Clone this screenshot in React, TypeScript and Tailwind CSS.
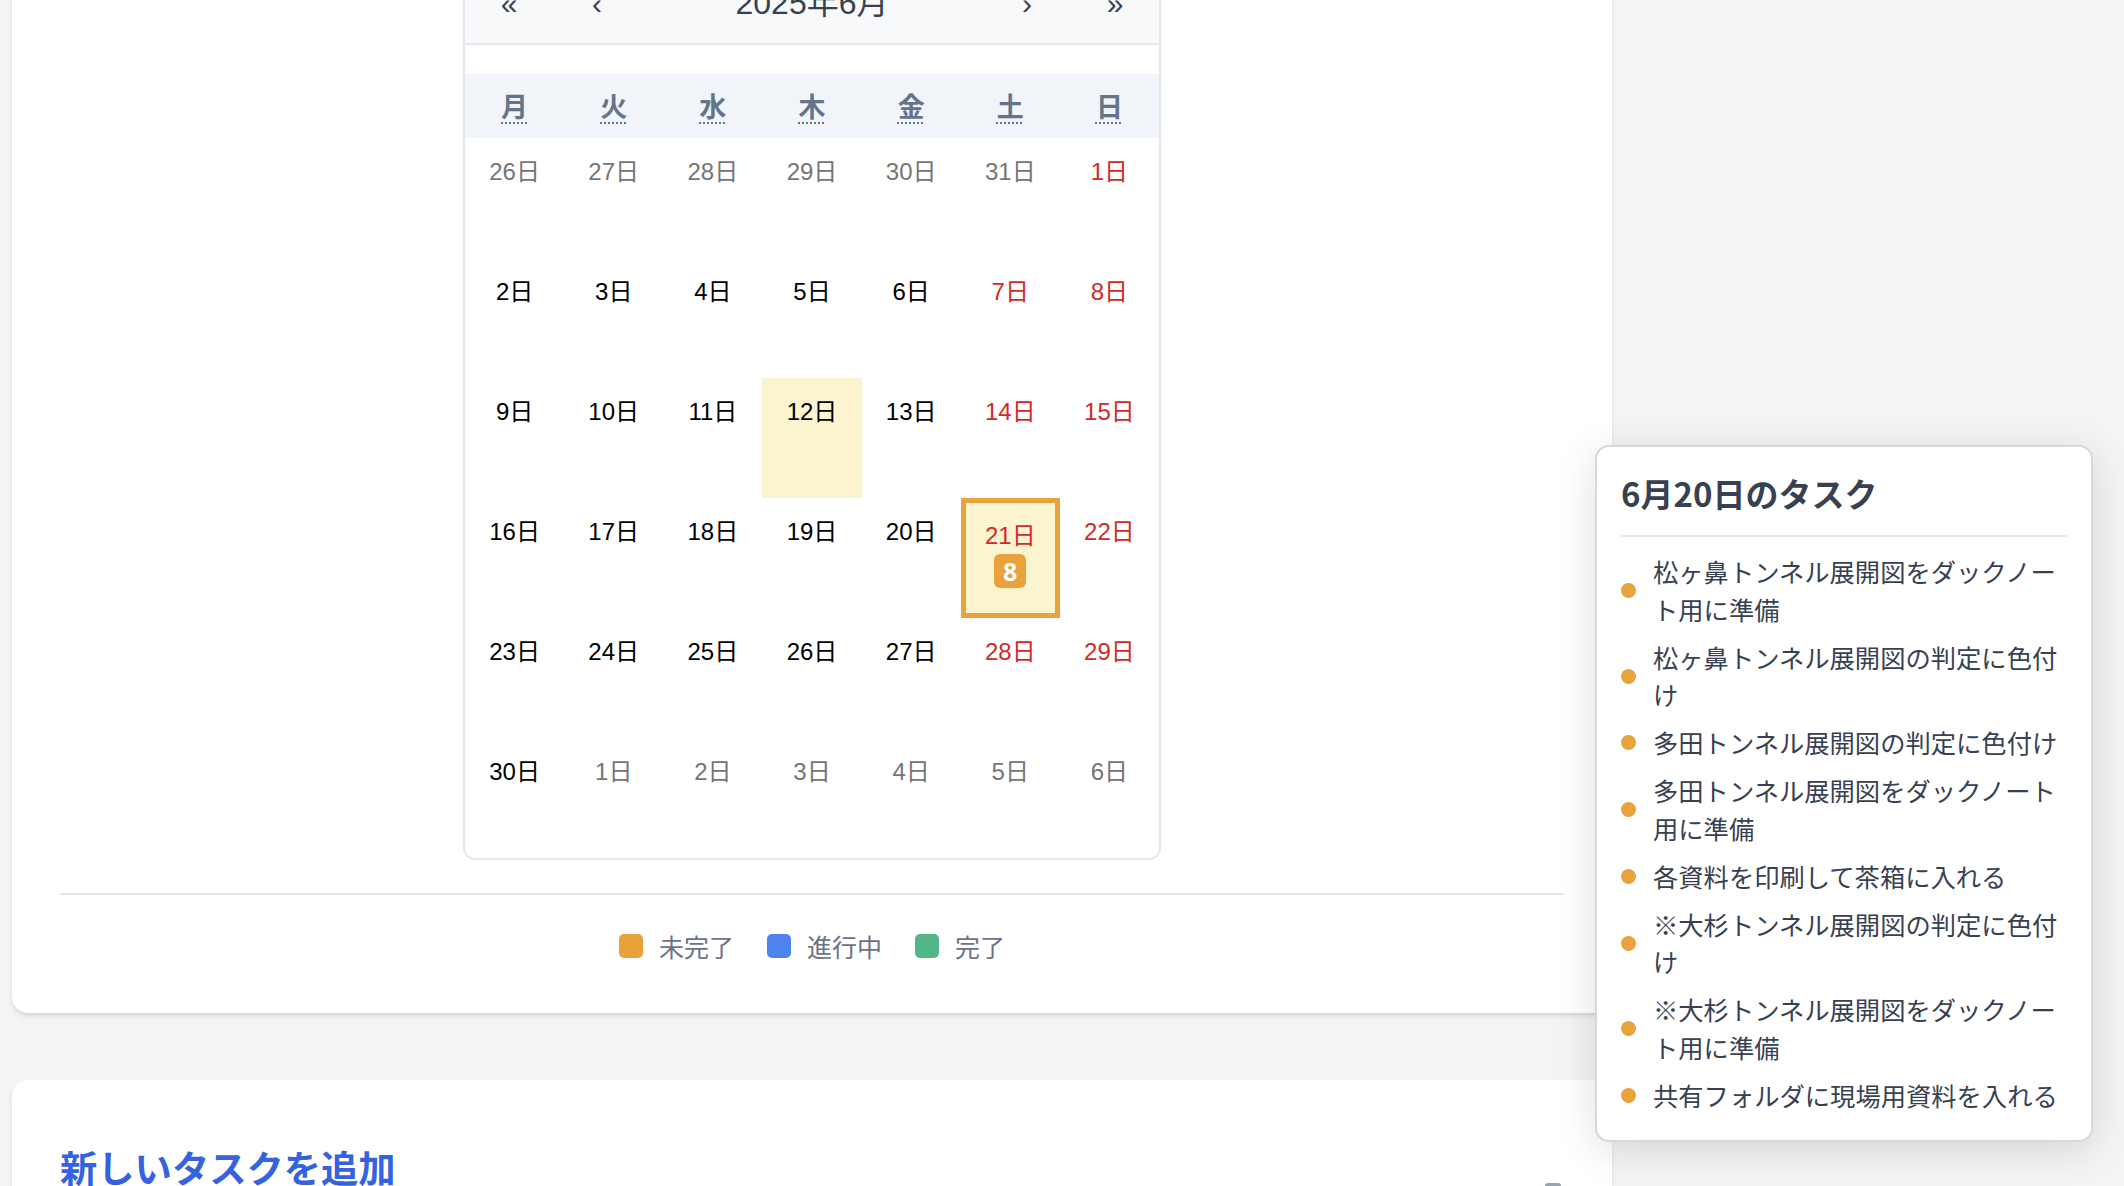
import React from 'react';

type Kind = 'o' | 'n' | 'w';

const rows: [number, Kind][][] = [
  [[26, 'o'], [27, 'o'], [28, 'o'], [29, 'o'], [30, 'o'], [31, 'o'], [1, 'w']],
  [[2, 'n'], [3, 'n'], [4, 'n'], [5, 'n'], [6, 'n'], [7, 'w'], [8, 'w']],
  [[9, 'n'], [10, 'n'], [11, 'n'], [12, 'n'], [13, 'n'], [14, 'w'], [15, 'w']],
  [[16, 'n'], [17, 'n'], [18, 'n'], [19, 'n'], [20, 'n'], [21, 'w'], [22, 'w']],
  [[23, 'n'], [24, 'n'], [25, 'n'], [26, 'n'], [27, 'n'], [28, 'w'], [29, 'w']],
  [[30, 'n'], [1, 'o'], [2, 'o'], [3, 'o'], [4, 'o'], [5, 'o'], [6, 'o']],
];

const weekdays = [
  ['月', '月曜日'],
  ['火', '火曜日'],
  ['水', '水曜日'],
  ['木', '木曜日'],
  ['金', '金曜日'],
  ['土', '土曜日'],
  ['日', '日曜日'],
];

const tasks = [
  '松ヶ鼻トンネル展開図をダックノート用に準備',
  '松ヶ鼻トンネル展開図の判定に色付け',
  '多田トンネル展開図の判定に色付け',
  '多田トンネル展開図をダックノート用に準備',
  '各資料を印刷して茶箱に入れる',
  '※大杉トンネル展開図の判定に色付け',
  '※大杉トンネル展開図をダックノート用に準備',
  '共有フォルダに現場用資料を入れる',
];

const colorFor = (k: Kind) =>
  k === 'o' ? 'text-[#757575]' : k === 'w' ? 'text-[#cf2a2a]' : 'text-black';

function Tile({ day, kind, row, col }: { day: number; kind: Kind; row: number; col: number }) {
  const isToday = row === 2 && col === 3;
  const isSelected = row === 3 && col === 5;

  if (isSelected) {
    return (
      <div className="h-[120px] flex flex-col items-center pt-[19px] border-[5px] border-[#e8a33d] bg-[#fcf3cf]">
        <span className={`text-[24px] leading-[28px] ${colorFor(kind)}`}>{day}日</span>
        <span className="mt-[4px] w-[32px] h-[34px] rounded-[6px] bg-[#e8a33d] text-white font-bold text-[25px] leading-none flex items-center justify-center font-['Noto_Sans','Noto_Sans_CJK_JP',sans-serif]">
          8
        </span>
      </div>
    );
  }

  return (
    <div className={`h-[120px] flex flex-col items-center pt-[20px] ${isToday ? 'bg-[#fcf3cf]' : ''}`}>
      <span className={`text-[24px] leading-[28px] ${colorFor(kind)}`}>{day}日</span>
    </div>
  );
}

function Calendar() {
  return (
    <div className="w-[698px] mx-auto border-2 border-[#e5e7eb] rounded-[12px] overflow-hidden bg-white font-['Liberation_Sans','Noto_Sans_CJK_JP',sans-serif]">
      <div className="h-[82px] flex items-center bg-[#f8f9fb] border-b-2 border-[#e5e7eb] text-[#374151]">
        <button className="w-[88px] text-[30px]">«</button>
        <button className="w-[88px] text-[30px]">‹</button>
        <div className="flex-1 text-center text-[32px]">2025年6月</div>
        <button className="w-[88px] text-[30px]">›</button>
        <button className="w-[88px] text-[30px]">»</button>
      </div>
      <div className="mt-[29px] h-[64px] grid grid-cols-7 bg-[#f1f4f9] items-center">
        {weekdays.map(([w, title]) => (
          <div key={w} className="text-center">
            <abbr
              title={title}
              className="text-[27px] font-bold text-[#64748b] underline decoration-dotted decoration-2 underline-offset-[6px] font-['Noto_Sans_CJK_JP',sans-serif]"
            >
              {w}
            </abbr>
          </div>
        ))}
      </div>
      <div className="grid grid-cols-7">
        {rows.map((r, ri) =>
          r.map(([d, k], ci) => <Tile key={`${ri}-${ci}`} day={d} kind={k} row={ri} col={ci} />)
        )}
      </div>
    </div>
  );
}

function Legend() {
  const items = [
    ['未完了', 'bg-[#e8a23a]'],
    ['進行中', 'bg-[#4f83ee]'],
    ['完了', 'bg-[#52b788]'],
  ];
  return (
    <div className="flex items-center justify-center gap-[33px] font-['Noto_Sans_CJK_JP',sans-serif]">
      {items.map(([label, bg]) => (
        <div key={label} className="flex items-center gap-[16px]">
          <span className={`w-[24px] h-[24px] rounded-[5px] ${bg}`} />
          <span className="text-[25px] leading-[24px] text-[#6b7385]">{label}</span>
        </div>
      ))}
    </div>
  );
}

function TaskPopover() {
  return (
    <div className="absolute left-[1595px] top-[445px] w-[498px] bg-white border-2 border-[#d5d9de] rounded-[14px] shadow-[0_8px_40px_rgba(0,0,0,0.13)] px-[24px] pt-[24px] pb-[26px] font-['Noto_Sans_CJK_JP',sans-serif]">
      <h3 className="text-[33px] leading-[44px] font-bold text-[#374151] pb-[20px] border-b-2 border-[#e5e7eb]">
        6月20日のタスク
      </h3>
      <ul className="pt-[16px] flex flex-col gap-[10.5px]">
        {tasks.map((t) => (
          <li key={t} className="flex items-center gap-[17px]">
            <span className="w-[15px] h-[15px] rounded-full bg-[#e8a33d] shrink-0" />
            <span className="flex-1 text-[25.3px] leading-[37.5px] text-[#374151]">{t}</span>
          </li>
        ))}
      </ul>
    </div>
  );
}

export default function App() {
  return (
    <div className="relative min-h-screen h-[1186px] overflow-hidden bg-[#f4f4f4]">
      <div className="ml-[12px] w-[1600px] -mt-[87px]">
        <section className="bg-white rounded-2xl shadow-md px-[48px] pt-[48px] pb-[55px]">
          <Calendar />
          <div className="mt-[33px] border-t-2 border-[#e5e7eb]" />
          <div className="pt-[39px]">
            <Legend />
          </div>
        </section>

        <section className="mt-[67px] bg-white rounded-2xl shadow-md px-[48px] pt-[60px] h-[400px]">
          <div className="flex justify-between items-start">
            <h2 className="text-[37.3px] leading-[54px] font-bold text-[#3563e0] font-['Noto_Sans_CJK_JP',sans-serif]">
              新しいタスクを追加
            </h2>
            <span className="mt-[43px] mr-[3px] w-[16px] h-[8px] rounded-[3px] bg-[#9ca3af]" />
          </div>
        </section>
      </div>

      <TaskPopover />
    </div>
  );
}
